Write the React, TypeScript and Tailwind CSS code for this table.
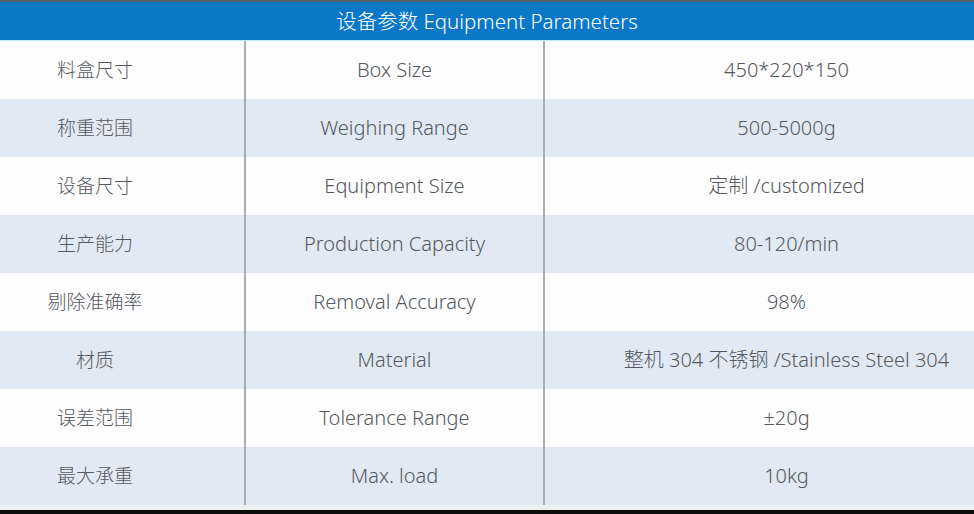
import React from 'react';

const ROWS: [string, string, string][] = [
  ['料盒尺寸', 'Box Size', '450*220*150'],
  ['称重范围', 'Weighing Range', '500-5000g'],
  ['设备尺寸', 'Equipment Size', '定制 /customized'],
  ['生产能力', 'Production Capacity', '80-120/min'],
  ['剔除准确率', 'Removal Accuracy', '98%'],
  ['材质', 'Material', '整机 304 不锈钢 /Stainless Steel 304'],
  ['误差范围', 'Tolerance Range', '±20g'],
  ['最大承重', 'Max. load', '10kg'],
];

const App: React.FC = () => {
  return (
    <div
      className="w-[974px] h-[514px] flex flex-col overflow-hidden bg-[#0d0d0d]"
      style={{ fontFamily: '"Noto Sans", "Noto Sans CJK SC", sans-serif' }}
    >
      <div className="h-[2px] bg-[#575f65]" />
      <div className="h-[39px] bg-[#0a78c6] flex items-center justify-center text-white text-[20.5px] font-light border-b border-[#bfe9f7]">
        设备参数 Equipment Parameters
      </div>
      <div className="flex flex-col">
        {ROWS.map(([cn, en, val], i) => (
          <div
            key={cn}
            className={`h-[58px] grid grid-cols-[246px_299px_1fr] text-[20px] font-light text-[#55595d] ${
              i % 2 === 0 ? 'bg-[#fdfdfd]' : 'bg-[#e1e9f5]'
            }`}
          >
            <div className="flex items-center justify-center pr-[54px] text-[19px] border-r-2 border-[#a9adb2]">{cn}</div>
            <div className="flex items-center justify-center border-r-2 border-[#a9adb2]">{en}</div>
            <div className="flex items-center justify-center pl-[54px]">{val}</div>
          </div>
        ))}
      </div>
      <div className="h-[5px] bg-[#eef0f0]" />
    </div>
  );
};

export default App;
